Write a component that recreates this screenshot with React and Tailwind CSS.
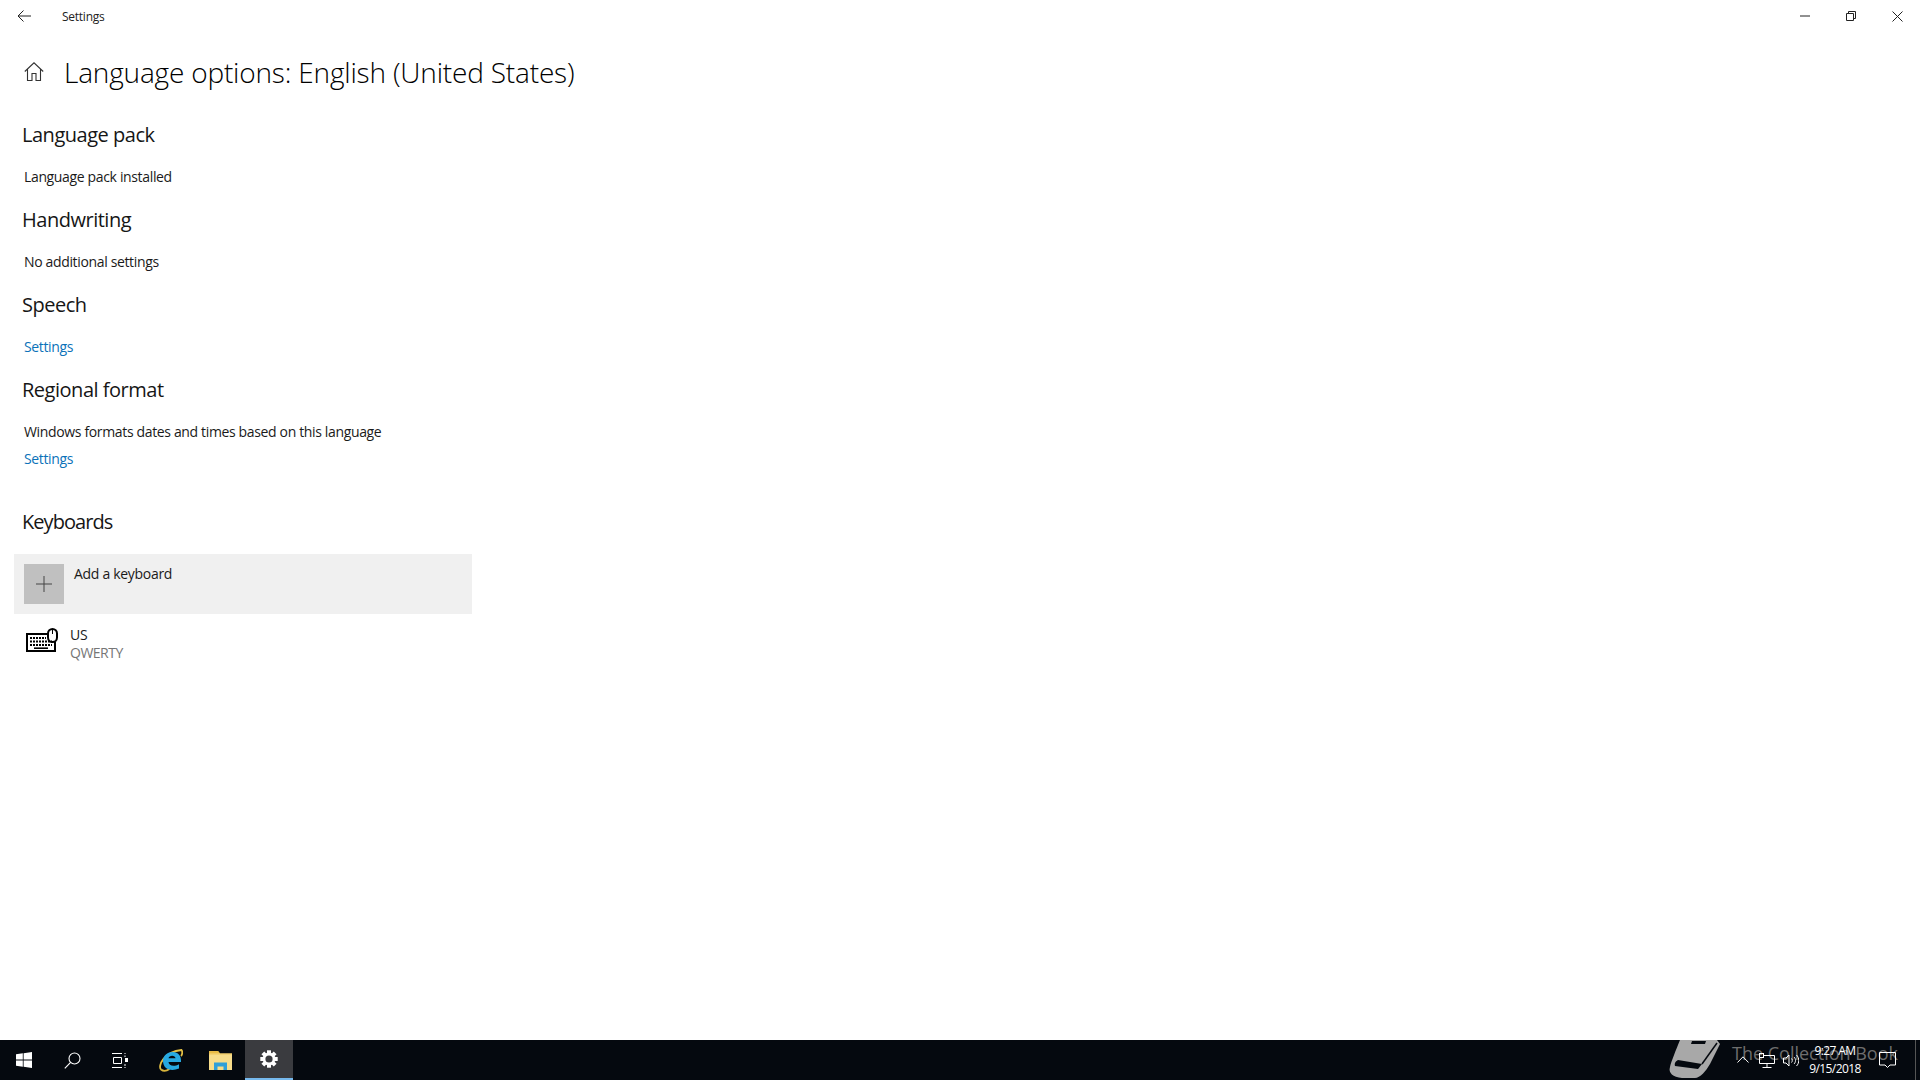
import React from "react";

const font = { fontFamily: '"Open Sans", "Noto Sans", sans-serif' };

function Heading({ children, className = "" }) {
  return <h2 className={`h-[34px] text-[20px] leading-[34px] text-[#161616] ${className}`}>{children}</h2>;
}

function Section({ title, children, className = "" }) {
  return (
    <section className={className}>
      <Heading className="tracking-[-0.48px]">{title}</Heading>
      <div className="mt-[15px] pl-[2px]">{children}</div>
    </section>
  );
}

function Body({ children, link, className = "" }) {
  return (
    <p className={`h-[20px] text-[14px] leading-[20px] tracking-[-0.35px] ${link ? "text-[#0b72b9]" : "text-[#1a1a1a]"} ${className}`}>
      {children}
    </p>
  );
}

function TopBar() {
  return (
    <header className="flex h-[32px] items-center">
      <button className="flex h-[32px] w-[48px] items-center justify-center">
        <svg width="14" height="12" viewBox="0 0 14 12" fill="none" stroke="#222" strokeWidth="1">
          <path d="M14 6H1M6.500 .5 1 6l5.500 5.500" />
        </svg>
      </button>
      <span className="ml-[14px] pt-[1px] text-[12px] tracking-[-0.25px] text-[#222]">Settings</span>
      <div className="ml-auto flex">
        <button className="flex h-[32px] w-[46px] items-center justify-center">
          <svg width="10" height="2" viewBox="0 0 10 2" stroke="#222" strokeWidth="1"><path d="M0 1h10" /></svg>
        </button>
        <button className="flex h-[32px] w-[46px] items-center justify-center">
          <svg width="10" height="10" viewBox="0 0 10 10" fill="none" stroke="#222" strokeWidth="1">
            <path d="M.5 2.500h7v7h-7zM2.500 2.500v-2h7v7h-2" />
          </svg>
        </button>
        <button className="flex h-[32px] w-[46px] items-center justify-center">
          <svg width="11" height="11" viewBox="0 0 11 11" fill="none" stroke="#222" strokeWidth="1">
            <path d="M.5 .5l10 10M10.500 .5l-10 10" />
          </svg>
        </button>
      </div>
    </header>
  );
}

function KeyboardIcon() {
  return (
    <svg width="32" height="24" viewBox="0 0 32 24" fill="none" stroke="#000" strokeWidth="2" className="shrink-0">
      <path d="M22 6H1v17h28v-9" />
      <rect x="22" y="1" width="9" height="13" rx="4.500" fill="#fff" />
      <path d="M26.500 1v5" strokeWidth="1" />
      <path d="M4 10h16M4 13.500h22M4 17h22" strokeWidth="1.800" strokeDasharray="2 1" />
      <path d="M8 20.200h14" strokeWidth="1.600" />
    </svg>
  );
}

function WindowsLogo() {
  return (
    <svg width="16" height="16" viewBox="0 0 16 16" fill="#fff">
      <path d="M0 2.300 6.800 1.300V7.600H0ZM7.600 1.200 16 0V7.600H7.600ZM0 8.400H6.800V14.700L0 13.700ZM7.600 8.400H16V16L7.600 14.800Z" />
    </svg>
  );
}

function SearchIcon() {
  return (
    <svg width="17" height="17" viewBox="0 0 17 17" fill="none" stroke="#fff" strokeWidth="1.100">
      <circle cx="10.500" cy="6.500" r="5.500" />
      <path d="M6.600 10.400 .8 16.400" />
    </svg>
  );
}

function TaskViewIcon() {
  return (
    <svg width="17" height="15" viewBox="0 0 17 15" fill="none" stroke="#fff" strokeWidth="1">
      <path d="M0 .5h10M0 14.500h10M1.500 4.500h8v6h-8zM12.500 .5h1M12.500 14.500h1M13 2.500v1.500M13 11v2" />
      <rect x="13" y="5" width="3" height="4" fill="#fff" stroke="none" />
    </svg>
  );
}

function EdgeIcon() {
  return (
    <svg width="25" height="23" viewBox="0 0 25 23" fill="none">
      <path d="M3 20.500C-.5 17 6 3 23.500 1c1.500 2 .5 5-.5 6" stroke="#e2bf45" strokeWidth="1.800" />
      <path d="M3 20.500c2.500 2 6 1.200 8.500-.5" stroke="#d9b53c" strokeWidth="1.800" />
      <path d="M23 13H10.500c.2 3.800 5.500 5 10.500 2.200v4.300c-8 3.400-16 .6-16-7.500C5 5.500 10.500 2.800 15 3c5 .2 8.500 3.500 8 10ZM10.500 9.300H17.500C17.500 5.800 11 5.800 10.500 9.300Z" fill="#27a9e1" />
    </svg>
  );
}

function FolderIcon() {
  return (
    <svg width="23" height="19" viewBox="0 0 23 19">
      <path d="M0 0h9l2 2.500h12V19H0Z" fill="#f7dc8a" />
      <path d="M0 0h9l2 2.500H0Z" fill="#e9bb45" />
      <path d="M0 2.500h23v1H0Z" fill="#eec75c" />
      <path d="M5 19v-7.500h13V19h-3.500v-3.500h-6V19Z" fill="#2f9fd8" />
    </svg>
  );
}

function GearIcon() {
  const teeth = [0, 45, 90, 135];
  return (
    <svg width="18" height="18" viewBox="0 0 18 18">
      {teeth.map((a) => (
        <rect key={a} x="7" y="0.300" width="4" height="17.400" fill="#fff" transform={`rotate(${a} 9 9)`} />
      ))}
      <circle cx="9" cy="9" r="6.400" fill="#fff" />
      <circle cx="9" cy="9" r="3.600" fill="#3a3b3f" />
    </svg>
  );
}

function TaskbarButton({ children, className = "" }) {
  return <div className={`flex h-[40px] items-center justify-center ${className}`}>{children}</div>;
}

function Taskbar() {
  return (
    <footer className="relative flex h-[40px] items-center bg-[#05090f] text-white">
      <TaskbarButton className="w-[48px]"><WindowsLogo /></TaskbarButton>
      <TaskbarButton className="w-[48px]"><SearchIcon /></TaskbarButton>
      <TaskbarButton className="w-[48px]"><TaskViewIcon /></TaskbarButton>
      <TaskbarButton className="w-[50px] pl-[3px]"><EdgeIcon /></TaskbarButton>
      <TaskbarButton className="w-[48px] pl-[4px]"><FolderIcon /></TaskbarButton>
      <TaskbarButton className="ml-[3px] w-[48px] border-b-2 border-[#76b9ed] bg-[#3a3b3f]"><GearIcon /></TaskbarButton>

      <div className="relative z-10 ml-auto flex h-full items-center">
        <svg width="12" height="7" viewBox="0 0 12 7" fill="none" stroke="#fff" strokeWidth="1" className="mr-[10px] mt-[-2px]">
          <path d="M.5 6.500 6 .8l5.500 5.700" />
        </svg>
        <svg width="16" height="15" viewBox="0 0 16 15" fill="none" stroke="#fff" strokeWidth="1" className="mr-[8px]">
          <path d="M4 2.500h11.500v8H.5V4.500M8 10.500v4M3.500 14.500h9" />
          <rect x="0.500" y="0.500" width="4" height="4" />
        </svg>
        <svg width="16" height="13" viewBox="0 0 16 13" fill="none" stroke="#fff" strokeWidth="1" className="mr-[10px]">
          <path d="M.5 4h2.500L6 1v11L3 9H.5ZM8.500 4.500c1 1 1 3 0 4M11 3c2 2 2 5 0 7M13.500 1c3 3 3 8 0 11" />
        </svg>
        <div className="w-[52px] whitespace-nowrap text-center text-[12px] leading-[18px] tracking-[-0.6px] text-white">
          <div>9:27 AM</div>
          <div>9/15/2018</div>
        </div>
        <svg width="17" height="17" viewBox="0 0 17 17" fill="none" stroke="#fff" strokeWidth="1" className="ml-[18px] mr-[19px]">
          <path d="M.5 .5h16v12.500H11l-2.500 2.500L6 13H.5Z" />
        </svg>
        <div className="h-full w-[1px] bg-[#555]" />
        <div className="w-[4px]" />
      </div>

      <div className="absolute left-[1668px] top-0 h-[40px] w-[54px]">
        <svg width="54" height="40" viewBox="0 0 54 40">
          <path d="M12 0H49L52 4 42 24C38 31 32 38 27 38H14C5 37 0 33 2 27 3 22 8 10 12 0Z" fill="#a8a8a8" />
          <path d="M10 20 34 24 30 29 7 26C6 23 8 21 10 20Z" fill="#05090f" />
          <path d="M24 1 38 1 37 4 23 4Z" fill="#05090f" />
          <path d="M49 3 34 24" stroke="#05090f" strokeWidth="1.500" fill="none" />
        </svg>
      </div>
      <span className="absolute left-[1732px] top-[1px] whitespace-nowrap text-[18px] leading-[24px] tracking-[0px] text-[#6e6e6e]">The Collection Book</span>
    </footer>
  );
}

export default function App() {
  return (
    <div style={font} className="flex h-[1080px] w-[1920px] flex-col overflow-hidden bg-white">
      <TopBar />
      <main className="flex-1">
        <div className="flex h-[80px] items-center pl-[24px]">
          <svg width="20" height="19" viewBox="0 0 20 19" fill="none" stroke="#333" strokeWidth="1.100" className="mt-[-1px]">
            <path d="M.8 9.500 10 .8l9.200 8.700M3.500 7.500v11h4.500v-7h4v7h4.500v-11" />
          </svg>
          <h1 className="ml-[20px] text-[28px] font-light leading-[40px] tracking-[-0.18px] text-black">Language options: English (United States)</h1>
        </div>
        <div className="pl-[22px]">
          <Section title="Language pack" className="mt-[6px]"><Body>Language pack installed</Body></Section>
          <Section title="Handwriting" className="mt-[16px]"><Body>No additional settings</Body></Section>
          <Section title="Speech" className="mt-[16px]"><Body link>Settings</Body></Section>
          <Section title="Regional format" className="mt-[16px]">
            <Body>Windows formats dates and times based on this language</Body>
            <Body link className="mt-[7px]">Settings</Body>
          </Section>
          <Heading className="mt-[36px] tracking-[-0.95px]">Keyboards</Heading>
        </div>
        <div className="ml-[14px] mt-[15px] flex h-[60px] w-[458px] items-start bg-[#f0f0f0] p-[10px]">
          <div className="flex h-[40px] w-[40px] items-center justify-center bg-[#c0c0c0]">
            <svg width="16" height="16" viewBox="0 0 16 16" stroke="#444" strokeWidth="1"><path d="M0 8h16M8 0v16" /></svg>
          </div>
          <span className="ml-[10px] text-[14px] leading-[20px] tracking-[-0.3px] text-[#1a1a1a]">Add a keyboard</span>
        </div>
        <div className="ml-[26px] mt-[14px] flex items-start">
          <KeyboardIcon />
          <div className="ml-[12px] mt-[-3px]">
            <div className="text-[14px] leading-[19px] tracking-[-0.3px] text-[#1a1a1a]">US</div>
            <div className="text-[14px] leading-[18px] tracking-[-0.5px] text-[#767676]">QWERTY</div>
          </div>
        </div>
      </main>
      <Taskbar />
    </div>
  );
}
